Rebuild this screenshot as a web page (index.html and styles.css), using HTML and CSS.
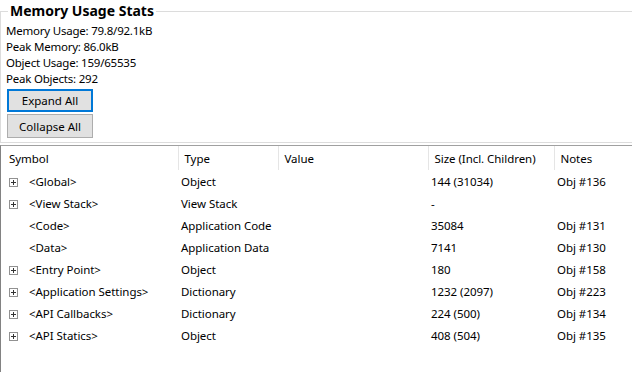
FILE: index.html
```html
<!DOCTYPE html>
<html lang="en">
    <head>
        <title>Memory Usage Stats</title>
        <link rel="stylesheet" href="styles.css">
    </head>
    <body>
        <fieldset class="stats">
            <legend>Memory Usage Stats</legend>
            <div class="line">Memory Usage: 79.8/92.1kB</div>
            <div class="line">Peak Memory: 86.0kB</div>
            <div class="line">Object Usage: 159/65535</div>
            <div class="line">Peak Objects: 292</div>
            <button class="btn focused">Expand All</button>
            <button class="btn">Collapse All</button>
        </fieldset>

        <div id="symbols">
            <table>
                <colgroup>
                    <col class="c-symbol">
                    <col class="c-type">
                    <col class="c-value">
                    <col class="c-size">
                    <col class="c-notes">
                </colgroup>
                <thead>
                    <tr>
                        <th>Symbol</th>
                        <th>Type</th>
                        <th>Value</th>
                        <th>Size (Incl. Children)</th>
                        <th>Notes</th>
                    </tr>
                </thead>
                <tbody id="rows"></tbody>
            </table>
        </div>

        <script>
            // symbol table rows
            const rows = [
                { name: "<Global>", type: "Object", size: "144 (31034)", notes: "Obj #136", kids: true },
                { name: "<View Stack>", type: "View Stack", size: "-", notes: "", kids: true },
                { name: "<Code>", type: "Application Code", size: "35084", notes: "Obj #131", kids: false },
                { name: "<Data>", type: "Application Data", size: "7141", notes: "Obj #130", kids: false },
                { name: "<Entry Point>", type: "Object", size: "180", notes: "Obj #158", kids: true },
                { name: "<Application Settings>", type: "Dictionary", size: "1232 (2097)", notes: "Obj #223", kids: true },
                { name: "<API Callbacks>", type: "Dictionary", size: "224 (500)", notes: "Obj #134", kids: true },
                { name: "<API Statics>", type: "Object", size: "408 (504)", notes: "Obj #135", kids: true }
            ];

            const plusIcon = `<svg class="expander" width="9" height="9" viewBox="0 0 9 9">
                <rect x="0.5" y="0.5" width="8" height="8" fill="#fff" stroke="#919191"/>
                <path d="M2 4.5h5M4.5 2v5" stroke="#333" stroke-width="1"/>
            </svg>`;

            const body = document.getElementById("rows");
            rows.forEach(r => {
                const tr = document.createElement("tr");
                tr.innerHTML = `
                    <td><span class="toggle">${r.kids ? plusIcon : ""}</span><span class="name"></span></td>
                    <td>${r.type}</td>
                    <td></td>
                    <td>${r.size}</td>
                    <td>${r.notes}</td>
                `;
                tr.querySelector(".name").textContent = r.name;
                body.appendChild(tr);
            });
        </script>
    </body>
</html>
```

FILE: styles.css
```css
body{
    margin:0;
    font-family: "Noto Sans", "Open Sans", sans-serif;
    font-size:11.5px;
    color:#000;
    background:#fff;
    overflow:hidden;
}
.stats{
    margin:3px 0 0 0;
    padding:4px 0 4px 5px;
    border:1px solid #dcdcdc;
    border-right:none;
    min-width:0;
}
.stats legend{
    margin-left:2px;
    padding:0 2px;
    font-weight:bold;
    font-size:14px;
    line-height:16px;
}
.line{
    line-height:16px;
    letter-spacing:-0.22px;
    white-space:nowrap;
}
.btn{
    display:block;
    width:86px;
    height:23px;
    margin:2px 0 0 1px;
    padding:0;
    font-family:inherit;
    font-size:11.5px;
    color:#000;
    background:#e1e1e1;
    border:1px solid #adadad;
}
.btn + .btn{
    margin-top:2px;
    height:24px;
}
.btn.focused{
    border:2px solid #0078d7;
}
#symbols{
    margin-top:2px;
    height:300px;
    border-top:1px solid #a0a0a0;
    border-left:1px solid #828282;
}
table{
    border-collapse:collapse;
    table-layout:fixed;
    width:700px;
    font-size:11.5px;
    letter-spacing:-0.05px;
}
.c-symbol{ width:177px; }
.c-type{ width:100px; }
.c-value{ width:150px; }
.c-size{ width:126px; }
.c-notes{ width:147px; }
th{
    height:24px;
    padding:0 0 0 6px;
    font-weight:normal;
    text-align:left;
    white-space:nowrap;
    border-right:1px solid #e5e5e5;
}
th:first-child{
    padding-left:8px;
}
td{
    height:22px;
    padding:0 0 0 3px;
    white-space:nowrap;
}
td:first-child{
    padding-left:8px;
}
.toggle{
    display:inline-block;
    width:20px;
    vertical-align:middle;
}
.expander{
    display:block;
}
```
